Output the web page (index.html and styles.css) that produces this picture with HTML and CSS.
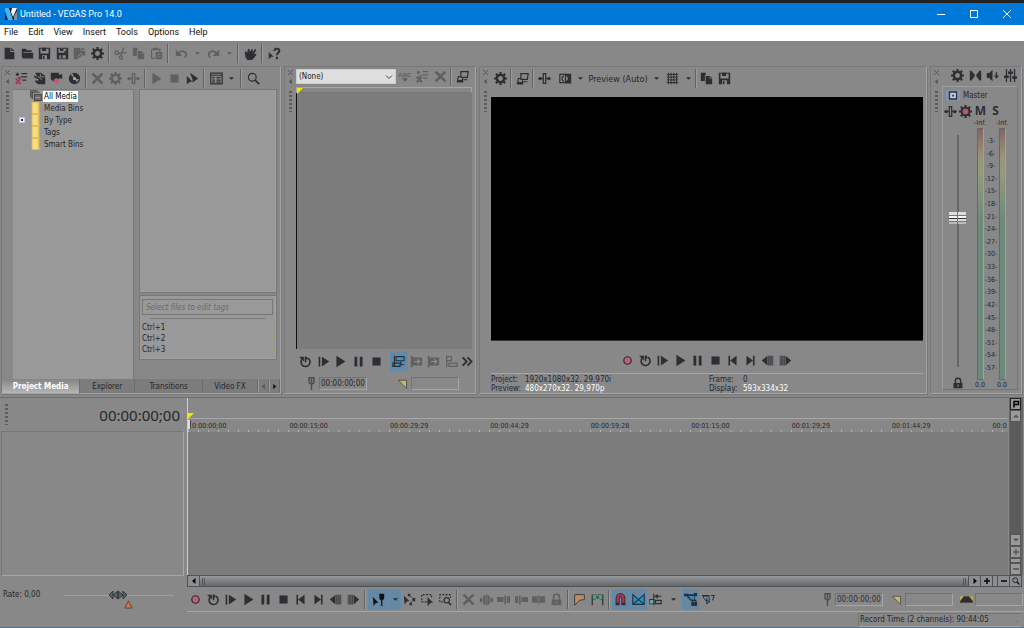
FILE: index.html
```html
<!DOCTYPE html>
<html lang="en">
<head>
<meta charset="utf-8">
<title>Untitled - VEGAS Pro 14.0</title>
<link rel="stylesheet" href="styles.css">
</head>
<body>
<svg class="sprite" aria-hidden="true">
  <symbol id="i-new" viewBox="0 0 16 16"><path fill="currentColor" d="M2 1h7v5h5v9H2zM10 1l4 4h-4z"/></symbol>
  <symbol id="i-open" viewBox="0 0 16 16"><path fill="currentColor" d="M1 2h5l1 2h6v2H3v7H1zM2 7h13v7H2z"/></symbol>
  <symbol id="i-save" viewBox="0 0 16 16"><path fill="currentColor" fill-rule="evenodd" d="M1 1h14v14H1zM3 2v6h10V2zM5 10v5h6v-5z"/><path fill="currentColor" d="M5 1h5v4H5zM6 11h2v4H6z"/></symbol>
  <symbol id="i-saveas" viewBox="0 0 16 16"><path fill="currentColor" fill-rule="evenodd" d="M1 1h14v14H1zM3 2v5h10V2zM4 10v4h8v-4z"/><path fill="currentColor" d="M5 2h4v3H5zM6 10h2v4H6zM10 6l3-3 1 2-3 3z"/></symbol>
  <symbol id="i-render" viewBox="0 0 16 16"><path fill="currentColor" d="M1 1h7l2 3v3l-4 4v4H1z"/><path fill="none" stroke="currentColor" stroke-width="2" d="M7 13l6-6M9 6h5v5M10 2l4 1"/></symbol>
  <symbol id="i-gear" viewBox="0 0 16 16"><circle cx="8" cy="8" r="4.5" fill="none" stroke="currentColor" stroke-width="3"/><path fill="none" stroke="currentColor" stroke-width="2.6" d="M8 0v3M8 13v3M0 8h3M13 8h3M2.3 2.3l2 2M11.7 11.7l2 2M13.7 2.3l-2 2M4.3 11.7l-2 2"/></symbol>
  <symbol id="i-cut" viewBox="0 0 16 16"><g fill="none" stroke="currentColor" stroke-width="1.6"><circle cx="3.5" cy="7" r="2.2"/><circle cx="8.5" cy="13" r="2"/><path d="M5 8l10-1M8 11l4-10"/></g></symbol>
  <symbol id="i-copy" viewBox="0 0 16 16"><path fill="currentColor" d="M1 1h6v3H6v7H1zM7 5h5v3h3v7H7zM13 5l2 2h-2z"/></symbol>
  <symbol id="i-paste" viewBox="0 0 16 16"><path fill="none" stroke="currentColor" stroke-width="1.4" d="M2 3h10v3M6 14H2V3"/><path fill="currentColor" d="M4 1h6v3H4zM7 6h8v9H7z"/><path stroke="#888" d="M9 9h4M9 12h4"/></symbol>
  <symbol id="i-undo" viewBox="0 0 16 16"><path fill="none" stroke="currentColor" stroke-width="2.2" d="M4 8c4-5 10-3 10 2l-2 3"/><path fill="currentColor" d="M1 3v8h8z"/></symbol>
  <symbol id="i-redo" viewBox="0 0 16 16"><path fill="none" stroke="currentColor" stroke-width="2.2" d="M12 8C8 3 2 5 2 10l2 3"/><path fill="currentColor" d="M15 3v8H7z"/></symbol>
  <symbol id="i-down" viewBox="0 0 16 16"><path fill="currentColor" d="M2 5h12l-6 6z"/></symbol>
  <symbol id="i-hand" viewBox="0 0 16 16"><path fill="currentColor" d="M1 7l1-2 2 2 1-5 2 1v3l3-4 1 2-1 3 4-5 1 2-3 5 3-1v2l-4 5-3 2H5l-3-4z"/></symbol>
  <symbol id="i-help" viewBox="0 0 16 16"><path fill="currentColor" d="M1 6l6 6H4l-3 3z"/><path fill="none" stroke="currentColor" stroke-width="2.4" d="M8 5c0-4 6-4 6 0 0 2-3 2-3 5M11 12v3"/></symbol>
  <symbol id="i-listx" viewBox="0 0 16 16"><path stroke="currentColor" stroke-width="1.8" d="M8 2h7M7 6h8M9 10h5M3 1v4M1 3h4M4 7h2"/><path stroke="#a83a58" stroke-width="2.2" d="M1 8l6 7M7 8l-6 7"/></symbol>
  <symbol id="i-listclear" viewBox="0 0 16 16"><path stroke="currentColor" stroke-width="1.8" d="M8 2h7M7 6h8M9 10h5M3 1v4M1 3h4M4 7h2"/><path stroke="currentColor" stroke-width="2.8" d="M1 8l6 7M7 8l-6 7"/></symbol>
  <symbol id="i-import" viewBox="0 0 16 16"><path fill="currentColor" d="M3 1h7l5 4v10H6l-4-4 2-1 2 1 1-2-5-2-1-3 4 2z"/><path fill="none" stroke="#888" stroke-width="1.2" d="M9 2v4h5M6 5l5 5"/></symbol>
  <symbol id="i-capture" viewBox="0 0 16 16"><path fill="currentColor" d="M1 1h10v3l4-2v7l-3-2-2 5H5L1 9z"/><circle cx="8" cy="11" r="3.4" fill="#b95e78"/></symbol>
  <symbol id="i-disc" viewBox="0 0 16 16"><circle cx="8" cy="8" r="7" fill="currentColor"/><path fill="#888" d="M8 8L3 3l3-1zM8 8l6 1-3 4z"/><circle cx="8" cy="8" r="2" fill="#aaa"/></symbol>
  <symbol id="i-x" viewBox="0 0 16 16"><path stroke="currentColor" stroke-width="3.4" d="M2 2l12 12M14 2L2 14"/></symbol>
  <symbol id="i-fx" viewBox="0 0 16 16"><path fill="none" stroke="currentColor" stroke-width="1.5" d="M6.500 2h3v12h-3z"/><path stroke="currentColor" stroke-width="1.600" d="M1 8h5M10 8h5"/><circle cx="2.500" cy="8" r="2" fill="currentColor"/><circle cx="13.500" cy="8" r="2" fill="currentColor"/></symbol>
  <symbol id="i-play" viewBox="0 0 16 16"><path fill="currentColor" d="M3 1l11 7-11 7z"/></symbol>
  <symbol id="i-stop" viewBox="0 0 16 16"><path fill="currentColor" d="M3 3h10v10H3z"/></symbol>
  <symbol id="i-auto" viewBox="0 0 16 16"><path fill="currentColor" d="M5 1l10 7-7 5V9zM1 5l7 7H5l-4 3z"/></symbol>
  <symbol id="i-view" viewBox="0 0 16 16"><path fill="none" stroke="currentColor" stroke-width="1.5" d="M1 1.500h14v13H1zM1 4h14"/><path stroke="currentColor" stroke-width="1.600" d="M3 7h3M3 10h3M3 12.500h3M8 7h5M8 10h5M8 12.500h5"/></symbol>
  <symbol id="i-search" viewBox="0 0 16 16"><circle cx="6.500" cy="6.500" r="4.800" fill="none" stroke="currentColor" stroke-width="1.400"/><path stroke="currentColor" stroke-width="2.200" d="M10 10l5 5"/></symbol>
  <symbol id="i-monitor" viewBox="0 0 16 16"><path fill="none" stroke="currentColor" stroke-width="1.500" d="M6 2h9l-1 7H6zM5 8H3l-1 5h6v-3M1 14.500h8M9 12h5"/></symbol>
  <symbol id="i-split" viewBox="0 0 16 16"><path fill="none" stroke="currentColor" stroke-width="1.400" d="M1 3h7v10H1zM6 5c-3 0-3 6 0 6"/><path fill="currentColor" d="M8 2h7v12H8v-3c4 0 4-6 0-6z"/></symbol>
  <symbol id="i-grid" viewBox="0 0 16 16"><path fill="none" stroke="currentColor" stroke-width="1.200" d="M3 1v14M6.300 1v14M9.700 1v14M13 1v14M1 3h14M1 6.300h14M1 9.700h14M1 13h14"/></symbol>
  <symbol id="i-bow" viewBox="0 0 16 16"><path fill="currentColor" d="M1 2h2l4 5v2l-4 5H1zM15 2h-2L9 7v2l4 5h2z"/></symbol>
  <symbol id="i-dim" viewBox="0 0 16 16"><path fill="currentColor" d="M1 5h3l4-4v14l-4-4H1zM12 4h1.600v4H16l-3.200 4-3-4H12z"/></symbol>
  <symbol id="i-faders" viewBox="0 0 16 16"><path stroke="currentColor" stroke-width="1.600" d="M3 0v16M8 0v16M13 0v16"/><path fill="currentColor" d="M0 8h6v3H0zM5 3h6v3H5zM10 9h6v3h-6z"/></symbol>
  <symbol id="i-gearred" viewBox="0 0 16 16"><use href="#i-gear"/><circle cx="8" cy="8" r="3.600" fill="#b8536f"/></symbol>
  <symbol id="i-rec" viewBox="0 0 16 16"><circle cx="8" cy="8" r="4.600" fill="#bd5f7b" stroke="currentColor" stroke-width="1.500"/></symbol>
  <symbol id="i-loop" viewBox="0 0 16 16"><path fill="none" stroke="currentColor" stroke-width="2" d="M11 4a5.500 5.500 0 1 1-7 1M8 2v7"/><path fill="currentColor" d="M0 2h6v6zM8 1l3 3-3 3z"/></symbol>
  <symbol id="i-playstart" viewBox="0 0 16 16"><path fill="currentColor" d="M2 2h2v12H2zM6 2l9 6-9 6z"/></symbol>
  <symbol id="i-pause" viewBox="0 0 16 16"><path fill="currentColor" d="M3 2h3.500v12H3zM9.500 2H13v12H9.500z"/></symbol>
  <symbol id="i-first" viewBox="0 0 16 16"><path fill="currentColor" d="M3 2h2v12H3zM13 2v12L5 8z"/></symbol>
  <symbol id="i-last" viewBox="0 0 16 16"><path fill="currentColor" d="M11 2h2v12h-2zM3 2v12l8-6z"/></symbol>
  <symbol id="i-prev" viewBox="0 0 16 16"><path fill="currentColor" d="M8 2v12L1 8zM9 2h1.500v12H9zM11.500 2H13v12h-1.500zM14 2h1v12h-1z"/></symbol>
  <symbol id="i-next" viewBox="0 0 16 16"><path fill="currentColor" d="M8 2v12l7-6zM5.500 2H7v12H5.500zM3 2h1.500v12H3zM1 2h1v12H1z"/></symbol>
  <symbol id="i-sync" viewBox="0 0 16 16"><path fill="#2f9bd4" stroke="currentColor" stroke-width="1.300" d="M5 2h10v5H5zM1 10h9v4H1z"/><path fill="none" stroke="currentColor" stroke-width="1.500" d="M3 1v13M11 8v4h4"/></symbol>
  <symbol id="i-addto" viewBox="0 0 16 16"><path fill="currentColor" d="M1 1h2v14H1zM3 3h12v10H3z"/><path fill="none" stroke="#909090" stroke-width="1.400" d="M5 8h6M9 5l3 3-3 3"/></symbol>
  <symbol id="i-fit" viewBox="0 0 16 16"><path fill="none" stroke="currentColor" stroke-width="1.600" d="M2 1v14M2 2h6v5M2 7h6M5 10h10v4H5z"/></symbol>
  <symbol id="i-more" viewBox="0 0 16 16"><path fill="none" stroke="currentColor" stroke-width="2.200" d="M2 3l5 5-5 5M8 3l5 5-5 5"/></symbol>
  <symbol id="i-pin" viewBox="0 0 16 16"><path fill="none" stroke="currentColor" stroke-width="1.700" d="M5 1h6v6L8 9 5 7zM8 2v5M8 9v7"/></symbol>
  <symbol id="i-mark" viewBox="0 0 16 16"><path fill="#c3bb75" stroke="#48483b" d="M3 4h10v10z"/></symbol>
  <symbol id="i-region" viewBox="0 0 16 16"><path fill="#b6aa65" d="M0 4h16v8H0z"/><path fill="#2c2e34" d="M5 4h6l5 6v2H0v-2z"/></symbol>
  <symbol id="i-lock" viewBox="0 0 16 16"><path fill="none" stroke="currentColor" stroke-width="2" d="M4.500 8V4.500c0-4 7-4 7 0V8"/><path fill="currentColor" d="M2 8h12v7H2z"/><path fill="#777" d="M7 10h2v3H7z"/></symbol>
  <symbol id="i-edit" viewBox="0 0 16 16"><path fill="#111" d="M1 5l7 7H5l-3 4zM9 1h6v6l-2 2h-2L9 7z"/><path stroke="#111" stroke-width="1.500" d="M12 8v8"/></symbol>
  <symbol id="i-env" viewBox="0 0 16 16"><path fill="currentColor" d="M1 3l7 7H5l-3 4z"/><path fill="none" stroke="currentColor" stroke-width="1" stroke-dasharray="2 1" d="M6 2l7 5-4 7"/><path fill="currentColor" d="M6 1h3v3H6zM12 6h3v4h-3zM8 12h3v3H8z"/></symbol>
  <symbol id="i-select" viewBox="0 0 16 16"><path fill="none" stroke="currentColor" stroke-width="1.400" stroke-dasharray="2.500 1.500" d="M7 11H1V2h12v5"/><path fill="currentColor" d="M8 5l7 7h-3l-4 4z"/></symbol>
  <symbol id="i-zoomtool" viewBox="0 0 16 16"><path fill="none" stroke="currentColor" stroke-width="1.300" stroke-dasharray="2.500 1.500" d="M5 11H1V2h13v4"/><circle cx="9.500" cy="9" r="3.300" fill="none" stroke="currentColor" stroke-width="1.400"/><path stroke="currentColor" stroke-width="2" d="M12 12l3 3"/></symbol>
  <symbol id="i-trim" viewBox="0 0 16 16"><path fill="currentColor" d="M0 6h3v5H0zM4 3h3v11H4zM9 3h3v11H9zM13 6h3v5h-3zM7.500 1h1v15h-1z"/></symbol>
  <symbol id="i-trims" viewBox="0 0 16 16"><path fill="currentColor" d="M0 5h8v6H0zM9 3h2v11H9zM12 4h4v8h-4z"/></symbol>
  <symbol id="i-trime" viewBox="0 0 16 16"><path fill="currentColor" d="M8 5h8v6H8zM5 3h2v11H5zM0 4h4v8H0z"/></symbol>
  <symbol id="i-splitev" viewBox="0 0 16 16"><path fill="currentColor" d="M0 4h7v8H0zM9 4h7v8H9zM7.500 2h1v12h-1z"/></symbol>
  <symbol id="i-marker" viewBox="0 0 16 16"><path fill="#b98d67" stroke="currentColor" d="M2 15V2h12v6L8 9l-3 3z"/></symbol>
  <symbol id="i-regions" viewBox="0 0 16 16"><path fill="none" stroke="currentColor" stroke-width="1.500" d="M1.500 15V2M14.500 15V2"/><path fill="#4caa82" stroke="currentColor" stroke-width=".6" d="M2 2h5v4L4 8H2zM9 2h5v6h-2L9 6z"/><path stroke="currentColor" d="M8 4v3"/></symbol>
  <symbol id="i-magnet" viewBox="0 0 16 16"><path fill="none" stroke="#2a2d36" stroke-width="5" d="M4.500 15V7c0-6 7-6 7 0v8"/><path fill="none" stroke="#a83250" stroke-width="3" d="M4.500 12V7c0-6 7-6 7 0v5"/></symbol>
  <symbol id="i-xfade" viewBox="0 0 16 16"><path fill="#2493cd" d="M1 14L8 8 1 2zM15 14L8 8l7-6zM1 14h14L8 8z"/><path fill="none" stroke="currentColor" stroke-width="1.400" d="M1 1v13h14V1M1 2l14 12M15 2L1 14"/></symbol>
  <symbol id="i-ripple" viewBox="0 0 16 16"><path fill="none" stroke="currentColor" stroke-width="1.500" d="M6 1v14M1 8h5v5H1zM8 9h7v4H8zM8 4h7M11 2L8 4l3 2"/><path fill="#61a9c7" d="M1 9h4v4H1z"/></symbol>
  <symbol id="i-lockenv" viewBox="0 0 16 16"><path fill="#2390c8" stroke="currentColor" d="M4 2h9v7H8z"/><path fill="currentColor" d="M0 1h5v3H0zM12 0h4v4h-4zM9 11h7v5H9z"/><path fill="none" stroke="currentColor" stroke-width="1.500" d="M3 3h10M4 4l5 5M10.500 11V9h4v2"/></symbol>
  <symbol id="i-ignore" viewBox="0 0 16 16"><path fill="#4c9abf" stroke="currentColor" d="M1 4h8v5H4z"/><path fill="none" stroke="currentColor" stroke-width="1.300" d="M0 3h9M6 6v7l4-3M11 3h4l-2 6"/></symbol>
  <symbol id="i-media" viewBox="0 0 16 16"><path fill="none" stroke="#454545" stroke-width="1.500" d="M1 10V1h9M3 12V3h10M6 6h9v8H6zM6 8h9M6 12h9"/></symbol>
  <symbol id="i-folder" viewBox="0 0 12 14"><path fill="#e9c860" stroke="#cda640" stroke-width=".8" d="M1 0h9v11l1 3H1z"/><path fill="#f5dd86" d="M2 1h6v12H2z"/></symbol>
  <symbol id="i-left" viewBox="0 0 16 16"><path fill="currentColor" d="M11 2v12L4 8z"/></symbol>
  <symbol id="i-right" viewBox="0 0 16 16"><path fill="currentColor" d="M5 2v12l7-6z"/></symbol>
  <symbol id="i-up" viewBox="0 0 16 16"><path fill="currentColor" d="M2 11h12L8 5z"/></symbol>
  <symbol id="i-plus" viewBox="0 0 16 16"><path stroke="currentColor" stroke-width="3" d="M8 2v12M2 8h12"/></symbol>
  <symbol id="i-minus" viewBox="0 0 16 16"><path stroke="currentColor" stroke-width="3" d="M2 8h12"/></symbol>
  <symbol id="i-close" viewBox="0 0 16 16"><path stroke="currentColor" stroke-width="2.200" d="M2 2l12 12M14 2L2 14"/></symbol>
  <symbol id="i-flag" viewBox="0 0 16 16"><path fill="none" stroke="currentColor" stroke-width="3" d="M4 15V3h9v6H5"/></symbol>
</svg>

<header class="titlebar">
  <svg class="logo" viewBox="0 0 12 12" aria-hidden="true"><path fill="#0d1c2a" d="M0 0h12v12H0z"/><path fill="#49b4ec" d="M0 0h4l4 12H0z"/><path fill="#10304a" d="M0 3l3 9H0z"/><path fill="#f1f1f1" d="M7 0h5L8 9 6 4z"/><path fill="#8a8f95" d="M9 8l3-5v9H9z"/></svg>
  <h1 class="title">Untitled - VEGAS Pro 14.0</h1>
  <div class="window-buttons">
    <button aria-label="Minimize"><svg viewBox="0 0 10 10"><path d="M1 5.500h8"/></svg></button>
    <button aria-label="Maximize"><svg viewBox="0 0 10 10"><path d="M1.500 1.500h7v7h-7z"/></svg></button>
    <button aria-label="Close"><svg viewBox="0 0 10 10"><path d="M1 1l8 8M9 1L1 9"/></svg></button>
  </div>
</header>
<nav class="menubar"><button>File</button><button>Edit</button><button>View</button><button>Insert</button><button>Tools</button><button>Options</button><button>Help</button></nav>

<div class="toolbar main-toolbar">
  <div class="group g6">
    <button aria-label="New"><svg><use href="#i-new"/></svg></button>
    <button aria-label="Open"><svg><use href="#i-open"/></svg></button>
    <button aria-label="Save"><svg><use href="#i-save"/></svg></button>
    <button aria-label="Save as"><svg><use href="#i-saveas"/></svg></button>
    <button aria-label="Render as" disabled><svg><use href="#i-render"/></svg></button>
    <button aria-label="Properties"><svg><use href="#i-gear"/></svg></button>
  </div>
  <i class="sep"></i>
  <div class="group g3">
    <button aria-label="Cut" disabled><svg><use href="#i-cut"/></svg></button>
    <button aria-label="Copy" disabled><svg><use href="#i-copy"/></svg></button>
    <button aria-label="Paste" disabled><svg><use href="#i-paste"/></svg></button>
  </div>
  <i class="sep"></i>
  <div class="group undo-group">
    <button aria-label="Undo" disabled><svg><use href="#i-undo"/></svg></button>
    <button class="drop" aria-label="Undo list" disabled><svg><use href="#i-down"/></svg></button>
    <button aria-label="Redo" disabled><svg><use href="#i-redo"/></svg></button>
    <button class="drop" aria-label="Redo list" disabled><svg><use href="#i-down"/></svg></button>
  </div>
  <i class="sep"></i>
  <div class="group g1"><button aria-label="Interactive tutorials"><svg><use href="#i-hand"/></svg></button></div>
  <i class="sep"></i>
  <div class="group g1"><button aria-label="What's this help"><svg><use href="#i-help"/></svg></button></div>
</div>

<main class="workspace">
<div class="dock">
  <section class="panel" aria-label="Project Media">
    <div class="handle"><button aria-label="Close panel"><svg><use href="#i-close"/></svg></button><button aria-label="Collapse panel"><svg><use href="#i-left"/></svg></button><i class="grip"></i></div>
    <div class="panel-body">
      <div class="toolbar media-toolbar">
        <div class="group g4">
          <button aria-label="Remove unused media"><svg><use href="#i-listx"/></svg></button>
          <button aria-label="Import media"><svg><use href="#i-import"/></svg></button>
          <button aria-label="Capture video"><svg><use href="#i-capture"/></svg></button>
          <button aria-label="Extract audio from CD"><svg><use href="#i-disc"/></svg></button>
        </div>
        <i class="sep"></i>
        <div class="group g3">
          <button aria-label="Remove" disabled><svg><use href="#i-x"/></svg></button>
          <button aria-label="Media properties" disabled><svg><use href="#i-gear"/></svg></button>
          <button aria-label="Media FX" disabled><svg><use href="#i-fx"/></svg></button>
        </div>
        <i class="sep"></i>
        <div class="group g3">
          <button aria-label="Start preview" disabled><svg><use href="#i-play"/></svg></button>
          <button aria-label="Stop preview" disabled><svg><use href="#i-stop"/></svg></button>
          <button aria-label="Auto preview"><svg><use href="#i-auto"/></svg></button>
        </div>
        <i class="sep"></i>
        <div class="group with-drop">
          <button aria-label="Views"><svg><use href="#i-view"/></svg></button>
          <button class="drop" aria-label="View list"><svg><use href="#i-down"/></svg></button>
        </div>
        <i class="sep"></i>
        <div class="group g1"><button aria-label="Search"><svg><use href="#i-search"/></svg></button></div>
      </div>
      <div class="media">
        <ul class="tree">
          <li><svg class="media-icon"><use href="#i-media"/></svg><span class="current">All Media</span></li>
          <li><svg><use href="#i-folder"/></svg><span>Media Bins</span></li>
          <li><button class="expand" aria-label="Expand By Type"></button><svg><use href="#i-folder"/></svg><span>By Type</span></li>
          <li><svg><use href="#i-folder"/></svg><span>Tags</span></li>
          <li><svg><use href="#i-folder"/></svg><span>Smart Bins</span></li>
        </ul>
        <div class="media-right">
          <div class="media-list"></div>
          <div class="tags">
            <input type="text" aria-label="Tags" placeholder="Select files to edit tags">
            <hr>
            <p>Ctrl+1</p><p>Ctrl+2</p><p>Ctrl+3</p>
          </div>
        </div>
      </div>
    </div>
    <div class="tabs" role="tablist">
      <button role="tab" aria-selected="true">Project Media</button>
      <button role="tab">Explorer</button>
      <button role="tab">Transitions</button>
      <button role="tab">Video FX</button>
      <button class="tab-arrow" aria-label="Scroll tabs left" disabled><svg><use href="#i-left"/></svg></button>
      <button class="tab-arrow" aria-label="Scroll tabs right"><svg><use href="#i-right"/></svg></button>
    </div>
  </section>

  <section class="panel" aria-label="Trimmer">
    <div class="handle"><button aria-label="Close panel"><svg><use href="#i-close"/></svg></button><button aria-label="Collapse panel"><svg><use href="#i-left"/></svg></button><i class="grip"></i></div>
    <div class="panel-body">
      <div class="toolbar trimmer-toolbar">
        <div class="combo"><select aria-label="Trimmer history"><option>(None)</option></select><svg viewBox="0 0 10 10"><path d="M2 3.500l3 3 3-3"/></svg></div>
        <div class="group g3">
          <button class="abc" aria-label="Sort history" disabled><span>ABC</span><svg viewBox="0 0 8 4"><path fill="currentColor" d="M1 0h6L4 4z"/></svg></button>
          <button aria-label="Clear history" disabled><svg><use href="#i-listclear"/></svg></button>
          <button aria-label="Remove current" disabled><svg><use href="#i-x"/></svg></button>
        </div>
        <i class="sep"></i>
        <div class="group g1"><button aria-label="External monitor"><svg><use href="#i-monitor"/></svg></button></div>
      </div>
      <div class="trim-ruler"><svg class="playmark" viewBox="0 0 6 6"><path fill="#f3ec00" d="M0 0h6L0 6z"/></svg></div>
      <div class="trim-area"></div>
      <div class="toolbar trimmer-transport">
        <div class="group g5">
          <button aria-label="Loop"><svg><use href="#i-loop"/></svg></button>
          <button aria-label="Play from start"><svg><use href="#i-playstart"/></svg></button>
          <button aria-label="Play"><svg><use href="#i-play"/></svg></button>
          <button aria-label="Pause"><svg><use href="#i-pause"/></svg></button>
          <button aria-label="Stop"><svg><use href="#i-stop"/></svg></button>
        </div>
        <div class="group g4">
          <button class="on" aria-label="Timeline overwrite"><svg><use href="#i-sync"/></svg></button>
          <button aria-label="Add to timeline from cursor" disabled><svg><use href="#i-addto"/></svg></button>
          <button aria-label="Add to timeline up to cursor" disabled><svg><use href="#i-addto"/></svg></button>
          <button aria-label="Fit to fill" disabled><svg><use href="#i-fit"/></svg></button>
        </div>
        <button class="more" aria-label="More buttons"><svg><use href="#i-more"/></svg></button>
      </div>
      <div class="trim-status">
        <svg class="icon muted"><use href="#i-pin"/></svg><input class="timebox" aria-label="Trimmer cursor" value="00:00:00;00">
        <svg class="icon"><use href="#i-mark"/></svg><input class="timebox" aria-label="Trimmer selection start">
      </div>
    </div>
  </section>

  <section class="panel" aria-label="Video Preview">
    <div class="handle"><button aria-label="Close panel"><svg><use href="#i-close"/></svg></button><button aria-label="Collapse panel"><svg><use href="#i-left"/></svg></button><i class="grip"></i></div>
    <div class="panel-body preview-body">
      <div class="toolbar preview-toolbar">
        <div class="group g1"><button aria-label="Project video properties"><svg><use href="#i-gear"/></svg></button></div>
        <i class="sep"></i>
        <div class="group g1"><button aria-label="Preview on external monitor"><svg><use href="#i-monitor"/></svg></button></div>
        <i class="sep"></i>
        <div class="group g1"><button aria-label="Video output FX"><svg><use href="#i-fx"/></svg></button></div>
        <div class="group with-drop">
          <button aria-label="Split screen view"><svg><use href="#i-split"/></svg></button>
          <button class="drop" aria-label="Split screen list"><svg><use href="#i-down"/></svg></button>
        </div>
        <button class="quality">Preview (Auto)</button>
        <div class="group overlay-group">
          <button class="drop" aria-label="Preview quality list"><svg><use href="#i-down"/></svg></button>
          <button aria-label="Overlays"><svg><use href="#i-grid"/></svg></button>
          <button class="drop" aria-label="Overlay list"><svg><use href="#i-down"/></svg></button>
        </div>
        <i class="sep"></i>
        <div class="group g2">
          <button aria-label="Copy snapshot"><svg><use href="#i-copy"/></svg></button>
          <button aria-label="Save snapshot"><svg><use href="#i-save"/></svg></button>
        </div>
      </div>
      <div class="screen"></div>
      <div class="toolbar preview-transport">
        <div class="group g10">
          <button aria-label="Record"><svg><use href="#i-rec"/></svg></button>
          <button aria-label="Loop"><svg><use href="#i-loop"/></svg></button>
          <button aria-label="Play from start"><svg><use href="#i-playstart"/></svg></button>
          <button aria-label="Play"><svg><use href="#i-play"/></svg></button>
          <button aria-label="Pause"><svg><use href="#i-pause"/></svg></button>
          <button aria-label="Stop"><svg><use href="#i-stop"/></svg></button>
          <button aria-label="Go to start"><svg><use href="#i-first"/></svg></button>
          <button aria-label="Go to end"><svg><use href="#i-last"/></svg></button>
          <button aria-label="Previous frame"><svg><use href="#i-prev"/></svg></button>
          <button aria-label="Next frame"><svg><use href="#i-next"/></svg></button>
        </div>
      </div>
      <dl class="info">
        <dt>Project:</dt><dd>1920x1080x32. 29,970i</dd><dt>Frame:</dt><dd>0</dd>
        <dt>Preview:</dt><dd class="lit">480x270x32. 29,970p</dd><dt>Display:</dt><dd class="lit">593x334x32</dd>
      </dl>
    </div>
  </section>

  <section class="panel" aria-label="Master Bus">
    <div class="handle"><button aria-label="Close panel"><svg><use href="#i-close"/></svg></button><button aria-label="Collapse panel"><svg><use href="#i-left"/></svg></button><i class="grip"></i></div>
    <div class="panel-body">
      <div class="toolbar master-toolbar">
        <div class="group g4">
          <button aria-label="Audio properties"><svg><use href="#i-gear"/></svg></button>
          <button aria-label="Downmix output"><svg><use href="#i-bow"/></svg></button>
          <button aria-label="Dim output"><svg><use href="#i-dim"/></svg></button>
          <button aria-label="Open mixing console"><svg><use href="#i-faders"/></svg></button>
        </div>
      </div>
      <div class="bus">
        <div class="bus-name"><svg viewBox="0 0 16 12"><path fill="#8195b8" d="M0 0h16v12H0z"/><path fill="#c4cad6" stroke="#2a3040" stroke-width="1.500" d="M4 2h8v8H4z"/><path fill="#2a3040" d="M7 5h2v2H7z"/></svg><span>Master</span></div>
        <div class="group g4 bus-buttons">
          <button aria-label="Master FX"><svg><use href="#i-fx"/></svg></button>
          <button aria-label="Automation settings"><svg><use href="#i-gearred"/></svg></button>
          <button aria-label="Mute" class="letter">M</button>
          <button aria-label="Solo" class="letter">S</button>
        </div>
        <div class="bus-main">
          <div class="fader">
            <input type="range" aria-label="Master volume" min="0" max="100" value="65">
            <button aria-label="Lock fader channels"><svg><use href="#i-lock"/></svg></button>
          </div>
          <div class="meter"><span>-Inf.</span><i></i><span>0.0</span></div>
          <ol class="scale"><li>3</li><li>6</li><li>9</li><li>12</li><li>15</li><li>18</li><li>21</li><li>24</li><li>27</li><li>30</li><li>33</li><li>36</li><li>39</li><li>42</li><li>45</li><li>48</li><li>51</li><li>54</li><li>57</li></ol>
          <div class="meter"><span>-Inf.</span><i></i><span>0.0</span></div>
        </div>
      </div>
    </div>
  </section>
</div>

<section class="timeline" aria-label="Timeline">
  <div class="tracks-side">
    <div class="timecode"><i class="grip"></i><output>00:00:00;00</output></div>
    <div class="track-list"></div>
    <div class="rate">
      <label for="rate">Rate: 0,00</label>
      <div class="rate-slider">
        <input id="rate" type="range" min="-20" max="20" value="0">
        <svg class="rate-thumb" viewBox="0 0 20 10"><path fill="#596164" stroke="#303638" d="M1 5l4-4v8zM5 5l5-4v8zM19 5l-4-4v8zM15 5l-5-4v8z"/></svg>
        <svg class="rate-normal" viewBox="0 0 10 10"><path fill="#c8754c" stroke="#673c29" d="M5 1l4 8H1z"/></svg>
      </div>
    </div>
  </div>

  <div class="tracks-main">
    <div class="arrange">
      <div class="marker-bar"><svg class="playmark" viewBox="0 0 6 6"><path fill="#f3ec00" d="M0 0h6L0 6z"/></svg></div>
      <ol class="ruler"><li>0:00:00;00</li><li>00:00:15;00</li><li>00:00:29;29</li><li>00:00:44;29</li><li>00:00:59;28</li><li>00:01:15;00</li><li>00:01:29;29</li><li>00:01:44;29</li><li>00:0</li></ol>
      <div class="track-area"></div>
    </div>
    <div class="vscroll">
      <button class="black" aria-label="Markers"><svg><use href="#i-flag"/></svg></button>
      <button aria-label="Scroll up"><svg><use href="#i-up"/></svg></button>
      <i class="vtrack"></i>
      <button aria-label="Scroll down"><svg><use href="#i-down"/></svg></button>
      <button aria-label="Taller tracks"><svg><use href="#i-plus"/></svg></button>
      <i class="vbar"></i>
      <button aria-label="Shorter tracks"><svg><use href="#i-minus"/></svg></button>
    </div>
    <div class="hscroll">
      <button aria-label="Scroll left"><svg><use href="#i-left"/></svg></button>
      <div class="hthumb"><i></i><i></i></div>
      <button aria-label="Scroll right"><svg><use href="#i-right"/></svg></button>
      <button aria-label="Zoom in"><svg><use href="#i-plus"/></svg></button>
      <i class="hbar"></i>
      <button aria-label="Zoom out"><svg><use href="#i-minus"/></svg></button>
      <button aria-label="Zoom tool"><svg><use href="#i-search"/></svg></button>
    </div>
    <div class="toolbar transport">
      <div class="group g10">
        <button aria-label="Record"><svg><use href="#i-rec"/></svg></button>
        <button aria-label="Loop"><svg><use href="#i-loop"/></svg></button>
        <button aria-label="Play from start"><svg><use href="#i-playstart"/></svg></button>
        <button aria-label="Play"><svg><use href="#i-play"/></svg></button>
        <button aria-label="Pause"><svg><use href="#i-pause"/></svg></button>
        <button aria-label="Stop"><svg><use href="#i-stop"/></svg></button>
        <button aria-label="Go to start"><svg><use href="#i-first"/></svg></button>
        <button aria-label="Go to end"><svg><use href="#i-last"/></svg></button>
        <button aria-label="Previous frame"><svg><use href="#i-prev"/></svg></button>
        <button aria-label="Next frame"><svg><use href="#i-next"/></svg></button>
      </div>
      <i class="sep"></i>
      <div class="edit-tool"><button class="on" aria-label="Normal edit tool"><svg><use href="#i-edit"/></svg></button><button class="on drop" aria-label="Edit tool list"><svg><use href="#i-down"/></svg></button></div>
      <div class="group g3">
        <button aria-label="Envelope edit tool"><svg><use href="#i-env"/></svg></button>
        <button aria-label="Selection edit tool"><svg><use href="#i-select"/></svg></button>
        <button aria-label="Zoom edit tool"><svg><use href="#i-zoomtool"/></svg></button>
      </div>
      <i class="sep"></i>
      <div class="group g6">
        <button aria-label="Delete" disabled><svg><use href="#i-x"/></svg></button>
        <button aria-label="Trim" disabled><svg><use href="#i-trim"/></svg></button>
        <button aria-label="Trim start" disabled><svg><use href="#i-trims"/></svg></button>
        <button aria-label="Trim end" disabled><svg><use href="#i-trime"/></svg></button>
        <button aria-label="Split" disabled><svg><use href="#i-splitev"/></svg></button>
        <button aria-label="Lock" disabled><svg><use href="#i-lock"/></svg></button>
      </div>
      <i class="sep"></i>
      <div class="group g2">
        <button aria-label="Insert marker"><svg><use href="#i-marker"/></svg></button>
        <button aria-label="Insert region"><svg><use href="#i-regions"/></svg></button>
      </div>
      <i class="sep"></i>
      <div class="group g4">
        <button class="on" aria-label="Enable snapping"><svg><use href="#i-magnet"/></svg></button>
        <button class="on" aria-label="Automatic crossfades"><svg><use href="#i-xfade"/></svg></button>
        <button aria-label="Auto ripple"><svg><use href="#i-ripple"/></svg></button>
        <button class="drop" aria-label="Ripple list"><svg><use href="#i-down"/></svg></button>
      </div>
      <div class="group g2">
        <button class="on" aria-label="Lock envelopes to events"><svg><use href="#i-lockenv"/></svg></button>
        <button aria-label="Ignore event grouping"><svg><use href="#i-ignore"/></svg></button>
      </div>
      <div class="positions">
        <svg class="icon muted"><use href="#i-pin"/></svg><input class="timebox" aria-label="Cursor position" value="00:00:00;00">
        <svg class="icon"><use href="#i-mark"/></svg><input class="timebox" aria-label="Selection start">
        <svg class="icon"><use href="#i-region"/></svg><input class="timebox" aria-label="Selection length">
      </div>
    </div>
  </div>
</section>
</main>
<footer class="statusbar"><span>Record Time (2 channels): 90:44:05</span><i class="resize"></i></footer>
</body>
</html>
```
FILE: styles.css
```css
:root {
  --face: #888888;
  --light: #a6a6a6;
  --dark: #6c6c6c;
  --ink: #25272b;
  --icon: #2c2e34;
  --off: #606060;
  --on: #6688a3;
  --ui: "DejaVu Sans Condensed", "Noto Sans", sans-serif;
}
*, *::before, *::after { box-sizing: border-box; }
body {
  margin: 0;
  min-height: 100vh;
  display: flex;
  flex-direction: column;
  background: var(--face);
  color: var(--ink);
  font: 8px/12px var(--ui);
  border-top: 3px solid #222222;
  border-bottom: 1px solid #3d78aa;
  overflow: hidden;
}
ul, ol, dl, dd, p, h1 { margin: 0; padding: 0; list-style: none; }
button, input, select { font: inherit; color: inherit; margin: 0; padding: 0; border: 0; background: none; border-radius: 0; min-width: 0; }
svg { display: block; flex: none; }
.sprite { position: absolute; width: 0; height: 0; }

.titlebar { height: 22px; flex: none; display: flex; align-items: center; gap: 3px; padding: 0 1px 0 5px; background: #0078d7; color: #ffffff; }
.logo { width: 12px; height: 12px; }
.title { flex: 1; font: 9px/14px Roboto, sans-serif; }
.window-buttons { display: flex; }
.window-buttons button { width: 33px; height: 22px; display: grid; place-items: center; }
.window-buttons svg { width: 10px; height: 10px; fill: none; stroke: #ffffff; stroke-width: 1; }
.menubar { height: 16px; flex: none; display: flex; align-items: flex-start; gap: 10px; padding-left: 4px; background: #ffffff; color: #111111; font: 9px/15px Roboto, sans-serif; }

.toolbar { display: flex; align-items: center; color: var(--icon); flex: none; }
.toolbar button, .group button, .more { display: flex; align-items: center; justify-content: center; height: 100%; }
.toolbar button svg, .group button svg { width: 13px; height: 13px; }
.toolbar button:disabled, .group button:disabled { color: var(--off); }
.toolbar .drop svg { width: 7px; height: 7px; }
.toolbar .on { background: var(--on); box-shadow: inset 0 0 0 1px #5f8cb0; }
.group { display: grid; grid-auto-flow: column; grid-auto-columns: 1fr; height: 100%; flex: none; }
.g1 { width: 18px; }
.g2 { width: 35px; }
.g3 { width: 53px; }
.g4 { width: 70px; }
.g5 { width: 88px; }
.g6 { width: 105px; }
.g10 { width: 175px; }
.with-drop { grid-template-columns: 18px 13px; }
.undo-group { grid-template-columns: 20px 12px 20px 12px; }
.overlay-group { grid-template-columns: 14px 19px 12px; }
.sep { flex: none; width: 2px; height: 19px; margin: 0 2px; border-left: 1px solid #616161; border-right: 1px solid #9b9b9b; }
.main-toolbar { height: 24px; padding-left: 1px; }

.workspace { flex: 1; display: grid; grid-template-rows: minmax(0, 333fr) minmax(0, 214fr); min-height: 0; }
.dock { display: grid; grid-template-columns: 280px 192px minmax(0, 1fr) 92px; gap: 3px; padding: 1px 2px 3px 1px; border-bottom: 1px solid var(--dark); min-height: 0; }
.panel { display: grid; grid-template-columns: 11px minmax(0, 1fr); grid-template-rows: minmax(0, 1fr) auto; border: 1px solid #777777; border-right-color: var(--light); border-bottom-color: var(--light); box-shadow: 1px 1px 0 #777777; min-height: 0; }
.panel-body { display: flex; flex-direction: column; min-height: 0; }
.handle { display: flex; flex-direction: column; align-items: center; gap: 2px; padding-top: 2px; color: #555555; }
.handle svg { width: 7px; height: 7px; }
.grip { width: 3px; height: 21px; margin-top: 4px; background: repeating-linear-gradient(#5b5b5b 0 2px, var(--face) 2px 4px); }

.media-toolbar { height: 22px; }
.media { flex: 1; display: grid; grid-template-columns: 121px minmax(0, 1fr); gap: 5px; padding-right: 3px; min-height: 0; }
.tree { background: #999999; border-top: 1px solid #7a7a7a; border-right: 1px solid #7a7a7a; }
.tree li { height: 12px; display: flex; align-items: center; gap: 1px; padding-left: 17px; position: relative; line-height: 11px; }
.tree li svg { width: 12px; height: 12px; }
.tree span { padding: 0 1px; }
.tree .current { background: #ffffff; color: #000000; }
.expand { position: absolute; left: 6px; top: 3px; width: 6px; height: 6px; border: 1px solid #c5c5d5; background: linear-gradient(#333355, #333355) center / 2px 2px no-repeat #e8e8f0; }
.media-right { display: flex; flex-direction: column; gap: 2px; padding-bottom: 19px; min-height: 0; }
.media-list, .tags { background: #999999; border: 1px solid #777777; box-shadow: inset -1px -1px 0 #a2a2a2; }
.media-list { flex: 1; }
.tags { padding: 3px 3px 4px 2px; line-height: 11px; }
.tags input { display: block; width: 100%; height: 16px; padding: 0 3px; border: 1px solid #777777; font-style: italic; }
.tags input::placeholder { color: #6b6b6b; opacity: 1; }
.tags hr { margin: 3px 8px; border: 0; border-top: 1px solid #777777; }
.tags p { background: linear-gradient(#b5a35c, #b5a35c) right center / 1px 2px no-repeat; }
.tabs { grid-column: 1 / -1; display: flex; height: 14px; background: #7c7c7c; line-height: 11px; }
.tabs button { flex: 56 1 0; border-right: 1px solid #6d6d6d; white-space: nowrap; }
.tabs button:nth-child(1) { flex-grow: 80; background: linear-gradient(#858585, #b4b4b4); color: #ffffff; font-weight: bold; }
.tabs button:nth-child(3) { flex-grow: 69; }
.tabs .tab-arrow { flex: 0 0 11px; display: grid; place-items: center; border-left: 1px solid #999999; color: #111111; }
.tabs .tab-arrow:disabled { color: #555555; }
.tab-arrow svg { width: 7px; height: 7px; }

.trimmer-toolbar { height: 19px; }
.combo { position: relative; flex: none; width: 100px; height: 15px; }
.combo select { width: 100%; height: 100%; padding: 0 2px; appearance: none; background: #dedede; border: 1px solid #cccccc; color: #222222; }
.combo svg { position: absolute; right: 2px; top: 3px; width: 10px; height: 10px; fill: none; stroke: #444444; pointer-events: none; }
.toolbar .abc { flex-direction: column; font: bold 6px/6px "Liberation Sans", sans-serif; }
.toolbar .abc svg { width: 8px; height: 4px; }
.trimmer-toolbar .sep { margin: 0 1px; }
.trim-ruler { flex: none; position: relative; height: 6px; margin: 1px 3px 0 0; border: 1px solid var(--light); border-bottom: 1px solid #777777; }
.playmark { position: absolute; left: 0; top: 0; width: 6px; height: 6px; }
.trim-area { flex: 1; margin-right: 3px; background: #7c7c7c; border-left: 1px solid #111111; }
.trimmer-transport { height: 24px; padding-left: 1px; }
.trimmer-transport .group { height: 20px; }
.trimmer-transport .g4 { margin-left: 5px; }
.more { width: 14px; }
.trim-status { flex: none; display: flex; align-items: center; justify-content: flex-end; gap: 2px; height: 20px; padding: 1px 16px 0 0; }
.trim-status .muted { margin-right: -1px; }
.trim-status .timebox + .icon { margin-left: 27px; }
.icon { width: 13px; height: 13px; }
.muted { color: #4c4c4c; }
.timebox { flex: none; width: 48px; height: 13px; padding: 0 1px; border: 1px solid #737373; border-right-color: var(--light); border-bottom-color: var(--light); }

.preview-toolbar { height: 23px; }
.preview-toolbar .sep { margin: 0 1px; }
.preview-toolbar .with-drop { margin-left: 3px; }
.toolbar .quality { width: 62px; white-space: nowrap; color: var(--ink); font-size: 9px; }
.screen { flex: 1; margin: 7px 3px 0 0; background: #000000; border-bottom: 1px solid #333333; }
.preview-transport { height: 32px; padding: 7px 4px 0 0; justify-content: center; }
.info { display: grid; grid-template-columns: 34px 184px 34px 1fr; margin: 0 3px 0 0; padding-top: 1px; border-top: 1px solid var(--light); line-height: 9px; }
.info .lit { color: #ffffff; }

.master-toolbar { height: 17px; padding-left: 7px; }
.bus { flex: 1; display: flex; flex-direction: column; margin: 2px 3px 3px 0; border: 1px solid #9e9e9e; border-right-color: #757575; border-bottom-color: #757575; min-height: 0; }
.bus-name { display: flex; align-items: center; gap: 3px; height: 17px; padding-left: 3px; }
.bus-name svg { width: 14px; height: 11px; }
.bus-buttons { height: 14px; color: var(--icon); width: 60px; }
.bus-buttons .letter { font: bold 12px/14px "Noto Sans", sans-serif; }
.bus-main { flex: 1; display: grid; grid-template-columns: 29px 16px 6px 16px; font-size: 7px; min-height: 0; }
.fader { display: flex; flex-direction: column; align-items: center; padding-top: 17px; min-height: 0; color: var(--icon); }
.fader input { flex: 1; min-height: 0; width: 18px; writing-mode: vertical-lr; direction: rtl; appearance: none; background: linear-gradient(#666666, #666666) center / 2px 100% no-repeat; }
.fader input::-webkit-slider-thumb { appearance: none; width: 17px; height: 12px; background: linear-gradient(90deg, transparent 8px, #777777 8px 9px, transparent 9px), linear-gradient(#dddddd 0 3px, #777777 3px 4px, #f5f5f5 4px 6px, #333333 6px 7px, #dddddd 7px 9px, #777777 9px 10px, #bbbbbb 10px); }
.fader button { margin: 10px 0 0; }
.fader svg { width: 12px; height: 12px; }
.meter { display: flex; flex-direction: column; align-items: center; line-height: 8px; padding: 1px 0 0; }
.meter i { flex: 1; width: 7px; margin: 1px 0; border: 1px solid #686868; border-right-color: #a0a0a0; background: linear-gradient(#826465, #9a9277 20%, #969a7c 32%, #6d8b7a 70%, #6d8b7a) top / 100% 130px no-repeat #6d8b7a; }
.scale { display: flex; flex-direction: column; justify-content: space-between; padding: 19px 0 17px; line-height: 8px; text-align: center; margin: 0 -8px; white-space: nowrap; }
.scale li::before, .scale li::after { content: "-"; }

.timeline { display: grid; grid-template-columns: 187px minmax(0, 1fr); min-height: 0; }
.tracks-side { display: grid; grid-template-rows: 33px minmax(0, 1fr) 36px; }
.timecode { display: flex; justify-content: space-between; align-items: center; padding: 0 7px 0 5px; font: 15px/20px "Noto Sans", sans-serif; }
.timecode .grip { margin-top: 0; }
.track-list { margin: 0 3px 0 1px; border: 1px solid #757575; border-right-color: var(--light); border-bottom-color: var(--light); }
.rate { display: flex; align-items: center; justify-content: space-between; padding: 2px 13px 0 3px; }
.rate-slider { position: relative; width: 110px; height: 22px; }
.rate-slider input { position: absolute; inset: 0; width: 100%; appearance: none; background: linear-gradient(#a0a0a0, #a0a0a0) center / 100% 1px no-repeat; }
.rate-slider input::-webkit-slider-thumb { appearance: none; width: 18px; height: 10px; }
.rate-thumb { position: absolute; left: 44px; top: 6px; width: 20px; height: 10px; pointer-events: none; }
.rate-normal { position: absolute; left: 60px; top: 16px; width: 9px; height: 9px; }
.tracks-main { display: grid; grid-template-columns: minmax(0, 1fr) 14px; grid-template-rows: minmax(0, 1fr) 12px 25px; padding-right: 1px; }
.arrange { display: flex; flex-direction: column; border-left: 1px solid #d0d0d0; margin-right: 1px; min-width: 0; }
.marker-bar { position: relative; flex: none; height: 21px; border-bottom: 1px solid var(--light); }
.marker-bar .playmark { top: 15px; }
.ruler { flex: none; position: relative; display: flex; height: 13px; overflow: hidden; font-size: 7px; line-height: 14px; }
.ruler li { flex: 0 0 12.25%; padding-left: 1px; background: linear-gradient(90deg, #b3b3b3 1px, transparent 1px) left bottom / 10% 2px repeat-x; }
.ruler li:first-child { padding-left: 4px; }
.ruler li:last-child { flex: 1 1 0; background-size: 10px 2px; }
.ruler::before { content: ""; position: absolute; left: -1px; top: 1px; width: 4px; height: 9px; background: #dddddd; border-right: 1px solid #444444; border-radius: 1px; }
.track-area { flex: 1; background: #7c7c7c; }
.vscroll { display: flex; flex-direction: column; padding: 0 2px 0 1px; background: #666666; }
.vscroll button { height: 12px; flex: none; display: grid; place-items: center; background: #999999; border: 1px solid #555555; color: #555555; }
.vscroll svg, .hscroll svg { width: 8px; height: 8px; }
.vscroll .black { color: #000000; border-color: #222222; }
.vtrack { flex: 1; background: #5b5b5b; }
.vbar { height: 5px; background: #999999; border: 1px solid #555555; }
.hscroll { grid-column: 1 / -1; display: flex; background: #505356; border: 1px solid #505356; gap: 1px; margin-right: 1px; }
.hscroll button { width: 11px; display: grid; place-items: center; background: #8c8e90; color: #050505; }
.hthumb { flex: 1; display: flex; justify-content: space-between; align-items: center; padding: 0 2px; background: linear-gradient(#97999b, #65696c); }
.hthumb i { width: 3px; height: 7px; border: 1px solid #505356; border-width: 0 1px; }
.hbar { width: 4px; background: #8c8e90; }
.transport { grid-column: 1 / -1; border-bottom: 1px solid var(--light); }
.transport .group { height: 21px; }
.edit-tool { display: flex; height: 21px; }
.edit-tool button { width: 21px; }
.edit-tool .drop { width: 12px; }
.positions { margin-left: auto; display: flex; align-items: center; gap: 2px; }
.positions .icon:not(:first-child) { margin-left: 5px; }
.positions .muted { margin-right: -1px; }
.statusbar { height: 15px; flex: none; display: flex; justify-content: flex-end; align-items: flex-end; }
.statusbar span { width: 163px; padding-left: 1px; line-height: 12px; border: 1px solid #777777; border-right: 0; border-bottom-color: var(--light); white-space: nowrap; margin-right: 3px; }
.resize { position: absolute; right: 5px; bottom: 4px; width: 7px; height: 7px; background: radial-gradient(circle, #666666 1px, transparent 1px) 0 0 / 3px 3px; clip-path: polygon(100% 0, 100% 100%, 0 100%); }
```
